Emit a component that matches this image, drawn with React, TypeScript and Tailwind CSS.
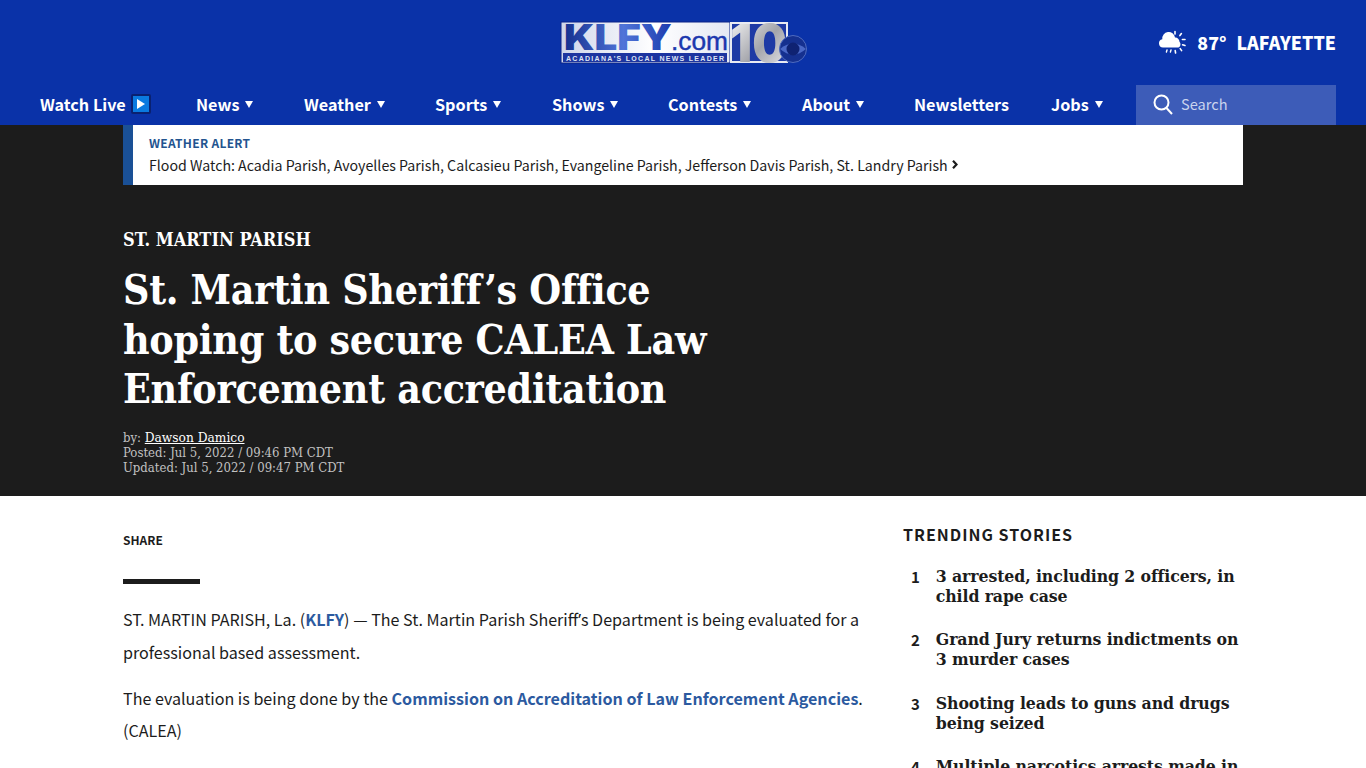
import React from "react";

const sans = "font-['Noto_Sans_CJK_SC','Liberation_Sans',sans-serif]";
const serif = "font-['DejaVu_Serif_Condensed','DejaVu_Serif',serif]";

const navItems = [
  { label: "News", width: "w-[108px]", caret: true },
  { label: "Weather", width: "w-[131px]", caret: true },
  { label: "Sports", width: "w-[117px]", caret: true },
  { label: "Shows", width: "w-[116px]", caret: true },
  { label: "Contests", width: "w-[134px]", caret: true },
  { label: "About", width: "w-[112px]", caret: true },
  { label: "Newsletters", width: "w-[137px]", caret: false },
  { label: "Jobs", width: "w-[85px]", caret: true },
];

const trending = [
  "3 arrested, including 2 officers, in child rape case",
  "Grand Jury returns indictments on 3 murder cases",
  "Shooting leads to guns and drugs being seized",
  "Multiple narcotics arrests made in St. Martin Parish",
];

const Logo = () => (
  <svg width="248" height="44" viewBox="0 0 248 44" aria-label="KLFY.com 10">
    <defs>
      <linearGradient id="plate" x1="0" y1="0" x2="1" y2="0">
        <stop offset="0" stopColor="#cfd6ea" />
        <stop offset="0.55" stopColor="#ffffff" />
        <stop offset="1" stopColor="#e4e8f3" />
      </linearGradient>
      <linearGradient id="ten" x1="0" y1="0" x2="1" y2="1">
        <stop offset="0" stopColor="#ffffff" />
        <stop offset="0.55" stopColor="#a4a5ab" />
        <stop offset="1" stopColor="#f0f0f3" />
      </linearGradient>
      <linearGradient id="letters" x1="0" y1="0" x2="1" y2="0">
        <stop offset="0" stopColor="#15308f" />
        <stop offset="0.55" stopColor="#4f74d8" />
        <stop offset="1" stopColor="#1c3bae" />
      </linearGradient>
    </defs>
    <rect x="1" y="1" width="169" height="41" fill="url(#plate)" stroke="#0a2287" />
    <text x="4" y="29" fontFamily="Inter" fontWeight="900" fontSize="35" fill="url(#letters)" textLength="108" lengthAdjust="spacingAndGlyphs">KLFY</text>
    <text x="111" y="29" fontFamily="Liberation Sans" fontSize="26" fill="#1c38ae" stroke="#1c38ae" strokeWidth="0.4" textLength="57" lengthAdjust="spacingAndGlyphs">.com</text>
    <rect x="3" y="32" width="164" height="9" fill="#1d35a0" />
    <text x="6" y="39.5" fontFamily="Liberation Sans" fontWeight="700" fontSize="7" fill="#dfe4f5" textLength="158" lengthAdjust="spacing">ACADIANA'S LOCAL NEWS LEADER</text>
    <rect x="170" y="1" width="58" height="41" fill="#e8eaf2" />
    <rect x="172" y="3" width="54" height="37" fill="#1e3aa5" />
    <text x="170" y="41" fontFamily="Inter" fontWeight="900" fontSize="52" fill="url(#ten)" textLength="57" lengthAdjust="spacingAndGlyphs">10</text>
    <circle cx="233" cy="28" r="13.5" fill="#15308f" stroke="#4f6bc0" strokeWidth="1" />
    <path d="M220 28 Q233 17 246 28 Q233 39 220 28Z" fill="#4a68c6" />
    <circle cx="233" cy="28" r="6.5" fill="#0f2272" />
  </svg>
);

const WeatherIcon = () => (
  <svg width="30" height="24" viewBox="0 0 30 24" fill="none">
    <g stroke="#fff" strokeWidth="1.6" strokeLinecap="round">
      <path d="M18 1.5v2.6M24.4 3.6l-1.5 2M28 9.5h-2.6M28 15.5l-2.4-.8M24.6 20.6l-1.4-2M18.6 23l-.4-2.4M12.6 3.4l1 1.6" />
    </g>
    <path d="M6 17.5a4.2 4.2 0 0 1-.7-8.3A6.2 6.2 0 0 1 18 7.6a4.2 4.2 0 0 1 4.5 4.2 3.6 3.6 0 0 1-1 5.7Z" fill="#fff" />
    <path d="M10 20l-.6 2M14 20l-.6 2" stroke="#fff" strokeWidth="1.4" strokeLinecap="round" />
  </svg>
);

const Caret = () => (
  <span className="ml-[6px] mt-[2px] h-0 w-0 border-x-[4px] border-t-[7px] border-x-transparent border-t-white" />
);

const Apos = () => <span className="font-['Noto_Sans',sans-serif]">’</span>;

export default function App() {
  return (
    <div className={`min-h-[768px] bg-white ${sans}`}>
      <header className="bg-[#0a32a8] text-white">
        <div className="grid h-[85px] grid-cols-[1fr_auto_1fr] items-start px-[30px]">
          <div />
          <div className="mt-[21px] pl-[2px]">
            <Logo />
          </div>
          <div className="mt-[28px] flex items-center justify-end gap-[10px] text-[17.8px] font-black leading-[28px]">
            <WeatherIcon />
            <span>87°</span>
            <span>LAFAYETTE</span>
          </div>
        </div>
        <nav className="flex h-[40px] items-center pl-[40px] pr-[30px] pb-[2px] text-[16.2px] font-bold">
          <div className="flex w-[156px] items-center">
            <span>Watch Live</span>
            <span className="ml-[5px] flex h-[20px] w-[20px] items-center justify-center rounded-[2px] border-2 border-[#0a2170] bg-[#0a7ae0]">
              <span className="h-0 w-0 border-y-[5px] border-l-[8px] border-y-transparent border-l-white" />
            </span>
          </div>
          {navItems.map((item) => (
            <div key={item.label} className={`flex items-center ${item.width}`}>
              <span>{item.label}</span>
              {item.caret && <Caret />}
            </div>
          ))}
          <div className="-mb-[2px] flex h-[40px] w-[200px] items-center gap-[8px] bg-[#3d5cb8] pb-[2px] pl-[17px] text-[14.6px] font-normal text-[#c9d3ee]">
            <svg width="20" height="21" viewBox="0 0 20 21" fill="none" stroke="#fff" strokeWidth="2">
              <circle cx="8.5" cy="8.5" r="7" />
              <path d="M13.5 14l5.5 6" />
            </svg>
            <span>Search</span>
          </div>
        </nav>
      </header>

      <section className="bg-[#1c1c1c] text-white">
        <div className="mx-auto w-[1120px]">
          <div className="flex h-[60px] flex-col justify-center border-l-[10px] border-[#1a5096] bg-white pb-[2px] pl-[16px] text-[#1c1c1c]">
            <div className="text-[12px] font-bold leading-[18px] tracking-[0.3px] text-[#23548f]">WEATHER ALERT</div>
            <div className="mt-[3px] flex items-center text-[14.2px] leading-[20px]">
              Flood Watch: Acadia Parish, Avoyelles Parish, Calcasieu Parish, Evangeline Parish, Jefferson Davis Parish, St. Landry Parish
              <svg className="ml-[4px]" width="6" height="9" viewBox="0 0 6 9" fill="none" stroke="#1c1c1c" strokeWidth="2.2">
                <path d="M1 .8l3.5 3.7L1 8.2" />
              </svg>
            </div>
          </div>
          <div className={`pt-[43px] pb-[21px] ${serif}`}>
            <div className="text-[18px] font-bold leading-[24px]">ST. MARTIN PARISH</div>
            <h1 className="mt-[14px] w-[620px] text-[40.7px] font-bold leading-[49.5px] tracking-[-0.3px]">
              St. Martin Sheriff’s Office hoping to secure CALEA Law Enforcement accreditation
            </h1>
            <div className="mt-[15px] text-[13px] leading-[15px] text-[#c2c2c2]">
              <div>
                by: <span className="text-[13.6px] text-white underline">Dawson Damico</span>
              </div>
              <div>Posted: Jul 5, 2022 / 09:46 PM CDT</div>
              <div>Updated: Jul 5, 2022 / 09:47 PM CDT</div>
            </div>
          </div>
        </div>
      </section>

      <main className="mx-auto flex h-[272px] w-[1120px] overflow-hidden text-[#1c1c1c]">
        <article className="w-[780px]">
          <div className="mt-[35px] text-[12px] font-bold leading-[18px]">SHARE</div>
          <div className="mt-[30px] h-[5px] w-[77px] bg-[#1c1c1c]" />
          <p className="mt-[19.6px] w-[745px] text-[16.1px] leading-[32px]">
            ST. MARTIN PARISH, La. (<span className="font-bold text-[#2c5aa0]">KLFY</span>) — The St. Martin Parish Sheriff<Apos />s Department is being evaluated for a professional based assessment.
          </p>
          <p className="mt-[14px] w-[745px] text-[16.1px] leading-[32px]">
            The evaluation is being done by the <span className="font-bold text-[#2c5aa0]">Commission on Accreditation of Law Enforcement Agencies</span>. (CALEA)
          </p>
        </article>
        <aside className="w-[340px]">
          <div className="mt-[27px] text-[16px] font-bold leading-[22px] tracking-[1px]">TRENDING STORIES</div>
          <ol className="mt-[21px] flex flex-col gap-[23.5px]">
            {trending.map((story, i) => (
              <li key={story} className="flex">
                <span className="mt-[1px] w-[33px] pl-[8px] text-[15px] font-bold leading-[20px]">{i + 1}</span>
                <span className={`w-[310px] text-[17.5px] font-bold leading-[20px] tracking-[-0.1px] ${serif}`}>{story}</span>
              </li>
            ))}
          </ol>
        </aside>
      </main>
    </div>
  );
}
